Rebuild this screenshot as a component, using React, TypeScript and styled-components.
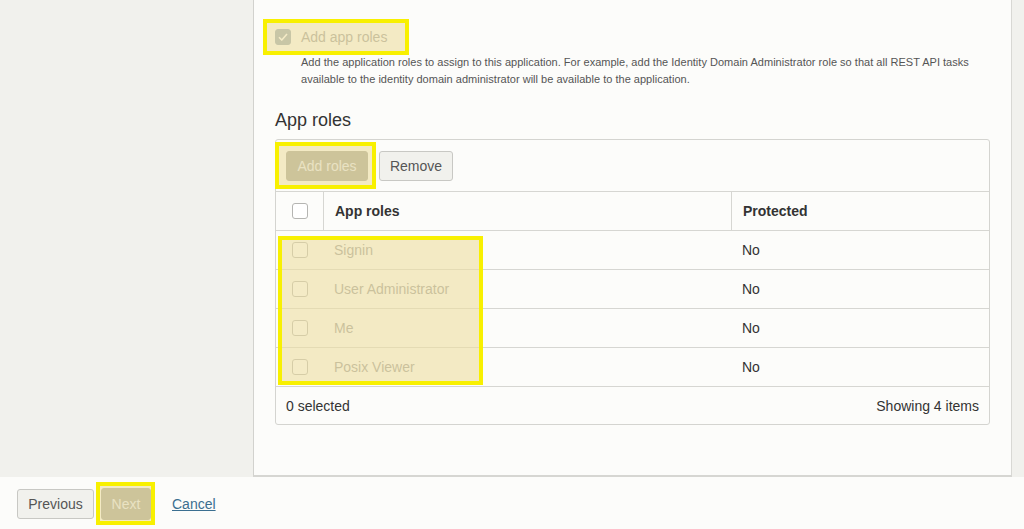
import * as React from 'react';
import styled, { createGlobalStyle } from 'styled-components';

const GlobalStyle = createGlobalStyle`
    html, body {
        margin: 0;
        padding: 0;
        background: #fcfcfa;
        font-family: "Liberation Sans", Arial, sans-serif;
        color: #333;
    }
    * { box-sizing: border-box; }
`;

const Page = styled.div`
    display: flex;
    flex-direction: column;
    width: 1024px;
    height: 529px;
    overflow: hidden;
`;

const Main = styled.div`
    display: flex;
    height: 477px;
    background: #f1f1ed;
`;

const Sidebar = styled.div`
    width: 253px;
    background: #f1f1ed;
`;

const Panel = styled.div`
    flex: 1;
    background: #fcfcfa;
    border-left: 1px solid #d2d2ce;
    border-right: 1px solid #d8d8d4;
    border-bottom: 2px solid #d6d6d2;
    padding: 19px 21px 0 21px;
`;

const RightStrip = styled.div`
    width: 12px;
`;

/* annotation box drawn over highlighted parts */
const Highlight = styled.span<{ $l: number; $t: number; $r: number; $b: number }>`
    position: relative;
    display: inline-flex;
    &::after {
        content: '';
        position: absolute;
        left: ${p => p.$l}px;
        top: ${p => p.$t}px;
        right: ${p => p.$r}px;
        bottom: ${p => p.$b}px;
        border: 4px solid #f8f000;
        background: rgba(236, 222, 160, 0.6);
        pointer-events: none;
    }
`;

const CheckRow = styled.label`
    display: flex;
    align-items: center;
    height: 36px;
    gap: 10px;
    padding-right: 22px;
    font-size: 14px;
    color: #979797;
`;

const Checkbox = styled.span<{ $checked?: boolean }>`
    display: inline-flex;
    align-items: center;
    justify-content: center;
    width: 16px;
    height: 16px;
    border-radius: 3px;
    border: 1px solid ${p => (p.$checked ? '#92a2af' : '#b5b5b2')};
    background: ${p => (p.$checked ? '#92a2af' : '#fff')};
    flex-shrink: 0;
`;

const Description = styled.p`
    margin: -1px 0 0 26px;
    font-size: 11px;
    line-height: 17px;
    letter-spacing: 0.02px;
    color: #555;
`;

const Heading = styled.h2`
    margin: 21px 0 8px 0;
    font-size: 18px;
    font-weight: normal;
    line-height: 22px;
    color: #333;
`;

const TableBox = styled.div`
    border: 1px solid #d4d4d0;
    border-radius: 3px;
    background: #fcfcfa;
`;

const Toolbar = styled.div`
    display: flex;
    align-items: center;
    gap: 11px;
    height: 52px;
    padding: 0 10px;
    border-bottom: 1px solid #d6d6d2;
`;

const Button = styled.button<{ $primary?: boolean; $w: number; $h?: number }>`
    height: ${p => p.$h ?? 30}px;
    width: ${p => p.$w}px;
    padding: 0;
    border-radius: 3px;
    font-family: "Liberation Sans", Arial, sans-serif;
    font-size: 14px;
    border: 1px solid ${p => (p.$primary ? '#9e9d91' : '#c8c8c4')};
    background: ${p => (p.$primary ? '#9e9d91' : '#f1f1ed')};
    color: ${p => (p.$primary ? '#e4e8f5' : '#555')};
`;

const Grid = styled.div`
    display: grid;
    grid-template-columns: 47px 408px 1fr;
`;

const Body = styled.div`
    position: relative;
`;

const RowsMark = styled.div`
    position: absolute;
    left: 2px;
    top: 5px;
    width: 205px;
    height: 149px;
    border: 4px solid #f8f000;
    background: rgba(236, 222, 160, 0.6);
`;

const Cell = styled.div<{ $head?: boolean; $divide?: boolean; $muted?: boolean }>`
    display: flex;
    align-items: center;
    height: 39px;
    padding-left: ${p => (p.$divide ? 11 : 0)}px;
    justify-content: ${p => (p.$divide ? 'flex-start' : 'center')};
    border-bottom: 1px solid #d6d6d2;
    border-left: ${p => (p.$head && p.$divide ? '1px solid #d6d6d2' : 'none')};
    font-size: 14px;
    font-weight: ${p => (p.$head ? 'bold' : 'normal')};
    color: ${p => (p.$muted ? '#979797' : '#333')};
`;

const TableFooter = styled.div`
    display: flex;
    align-items: center;
    justify-content: space-between;
    height: 37px;
    padding: 0 10px;
    font-size: 14px;
    color: #333;
`;

const Footer = styled.div`
    display: flex;
    align-items: center;
    gap: 7px;
    height: 52px;
    padding: 2px 0 0 17px;
    background: #fcfcfa;
`;

const CancelLink = styled.a`
    margin-left: 14px;
    font-size: 14px;
    color: #3b6f90;
    text-decoration: underline;
`;

const roles = ['Signin', 'User Administrator', 'Me', 'Posix Viewer'];

const Check = () => (
    <svg width="10" height="8" viewBox="0 0 10 8">
        <path d="M1 4.2 L3.8 7 L9 1" stroke="#fff" strokeWidth="1.6" fill="none" />
    </svg>
);

const App = () => (
    <Page>
        <GlobalStyle />
        <Main>
            <Sidebar />
            <Panel>
                <Highlight $l={-12} $t={0} $r={0} $b={0}>
                    <CheckRow>
                        <Checkbox $checked><Check /></Checkbox>
                        Add app roles
                    </CheckRow>
                </Highlight>
                <Description>
                    Add the application roles to assign to this application. For example, add the Identity Domain Administrator role so that all REST API tasks available to the identity domain administrator will be available to the application.
                </Description>
                <Heading>App roles</Heading>
                <TableBox>
                    <Toolbar>
                        <Highlight $l={-11} $t={-9} $r={-8} $b={-8}>
                            <Button $primary $w={82}>Add roles</Button>
                        </Highlight>
                        <Button $w={74}>Remove</Button>
                    </Toolbar>
                    <Grid>
                        <Cell $head><Checkbox /></Cell>
                        <Cell $head $divide>App roles</Cell>
                        <Cell $head $divide>Protected</Cell>
                    </Grid>
                    <Body>
                        <Grid>
                            {roles.map(r => (
                                <React.Fragment key={r}>
                                    <Cell $muted><Checkbox /></Cell>
                                    <Cell $divide $muted>{r}</Cell>
                                    <Cell $divide>No</Cell>
                                </React.Fragment>
                            ))}
                        </Grid>
                        <RowsMark />
                    </Body>
                    <TableFooter>
                        <span>0 selected</span>
                        <span>Showing 4 items</span>
                    </TableFooter>
                </TableBox>
            </Panel>
            <RightStrip />
        </Main>
        <Footer>
            <Button $w={77}>Previous</Button>
            <Highlight $l={-5} $t={-6} $r={-4} $b={-5}>
                <Button $primary $w={50} $h={32}>Next</Button>
            </Highlight>
            <CancelLink href="#">Cancel</CancelLink>
        </Footer>
    </Page>
);

export default App;
